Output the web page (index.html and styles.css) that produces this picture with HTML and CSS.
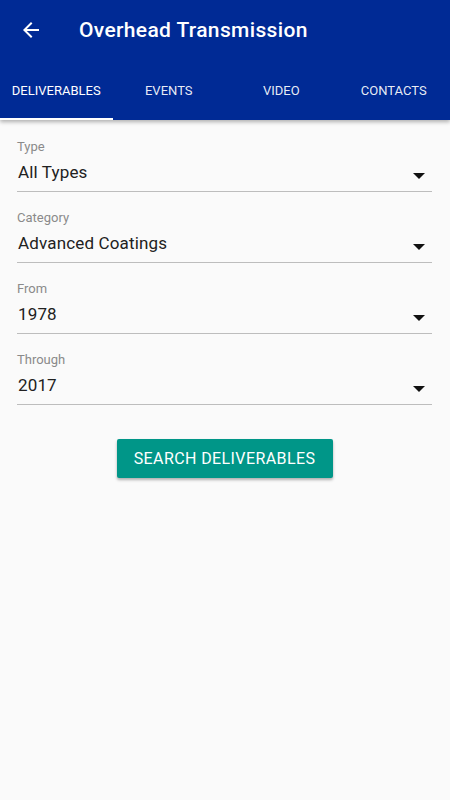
FILE: index.html
```html
<!DOCTYPE html>
<html lang="en">
<head>
    <meta charset="UTF-8">
    <meta name="viewport" content="width=device-width, initial-scale=1.0">
    <title>Overhead Transmission</title>
    <link rel="stylesheet" href="styles.css">
</head>
<body>
    <header class="app-bar">
        <div class="toolbar">
            <button class="back-btn" aria-label="Back">
                <svg width="24" height="24" viewBox="0 0 24 24"><path d="M20 11H7.83l5.59-5.59L12 4l-8 8 8 8 1.41-1.41L7.83 13H20v-2z" fill="#fff"/></svg>
            </button>
            <h1 class="title">Overhead Transmission</h1>
        </div>
        <nav class="tabs">
            <div class="tab active">DELIVERABLES</div>
            <div class="tab">EVENTS</div>
            <div class="tab">VIDEO</div>
            <div class="tab">CONTACTS</div>
        </nav>
    </header>

    <main class="form">
        <div class="field">
            <label class="field-label">Type</label>
            <div class="field-value">All Types<span class="caret"></span></div>
        </div>
        <div class="field">
            <label class="field-label">Category</label>
            <div class="field-value">Advanced Coatings<span class="caret"></span></div>
        </div>
        <div class="field">
            <label class="field-label">From</label>
            <div class="field-value">1978<span class="caret"></span></div>
        </div>
        <div class="field">
            <label class="field-label">Through</label>
            <div class="field-value">2017<span class="caret"></span></div>
        </div>

        <div class="actions">
            <button class="search-btn">SEARCH DELIVERABLES</button>
        </div>
    </main>
</body>
</html>
```

FILE: styles.css
```css
:root {
    --primary-color: #002a95;
    --accent-color: #009688;
    --text-color: #212121;
    --hint-color: #8a8a8a;
    --line-color: #bdbdbd;
}

* {
    margin: 0;
    padding: 0;
    box-sizing: border-box;
}

body {
    font-family: Roboto, "Noto Sans", sans-serif;
    background-color: #fafafa;
    color: var(--text-color);
    width: 450px;
    height: 800px;
    overflow: hidden;
}

.app-bar {
    background-color: var(--primary-color);
    color: #fff;
    box-shadow: 0 2px 4px rgba(0,0,0,0.3);
}

.toolbar {
    display: flex;
    align-items: center;
    height: 60px;
    padding-left: 19px;
}

.back-btn {
    background: none;
    border: none;
    width: 24px;
    height: 24px;
    display: flex;
}

.title {
    font-size: 21px;
    font-weight: 500;
    margin-left: 36px;
    letter-spacing: 0.35px;
}

.tabs {
    display: flex;
    height: 60px;
}

.tab {
    flex: 1;
    display: flex;
    align-items: center;
    justify-content: center;
    font-size: 13px;
    color: rgba(255,255,255,0.92);
    border-bottom: 2px solid transparent;
    padding-top: 2px;
}

.tab.active {
    color: #fff;
    border-bottom-color: #fff;
}

.form {
    padding: 19px 18px 0 17px;
}

.field {
    margin-bottom: 18px;
    border-bottom: 1px solid var(--line-color);
}

.field-label {
    display: block;
    font-size: 13px;
    line-height: 16px;
    color: var(--hint-color);
}

.field-value {
    display: flex;
    align-items: center;
    justify-content: space-between;
    font-size: 17px;
    line-height: 26px;
    padding: 4px 0 6px 1px;
    letter-spacing: 0.15px;
}

.caret {
    width: 0;
    height: 0;
    border-left: 6px solid transparent;
    border-right: 6px solid transparent;
    border-top: 6px solid #111;
    margin-right: 7px;
    margin-top: 7px;
}

.actions {
    display: flex;
    justify-content: center;
    padding-top: 16px;
}

.search-btn {
    background-color: var(--accent-color);
    color: #fff;
    border: none;
    border-radius: 2px;
    width: 216px;
    height: 39px;
    font-family: inherit;
    font-size: 16px;
    letter-spacing: 0.4px;
    box-shadow: 0 2px 3px rgba(0,0,0,0.3);
}
```
